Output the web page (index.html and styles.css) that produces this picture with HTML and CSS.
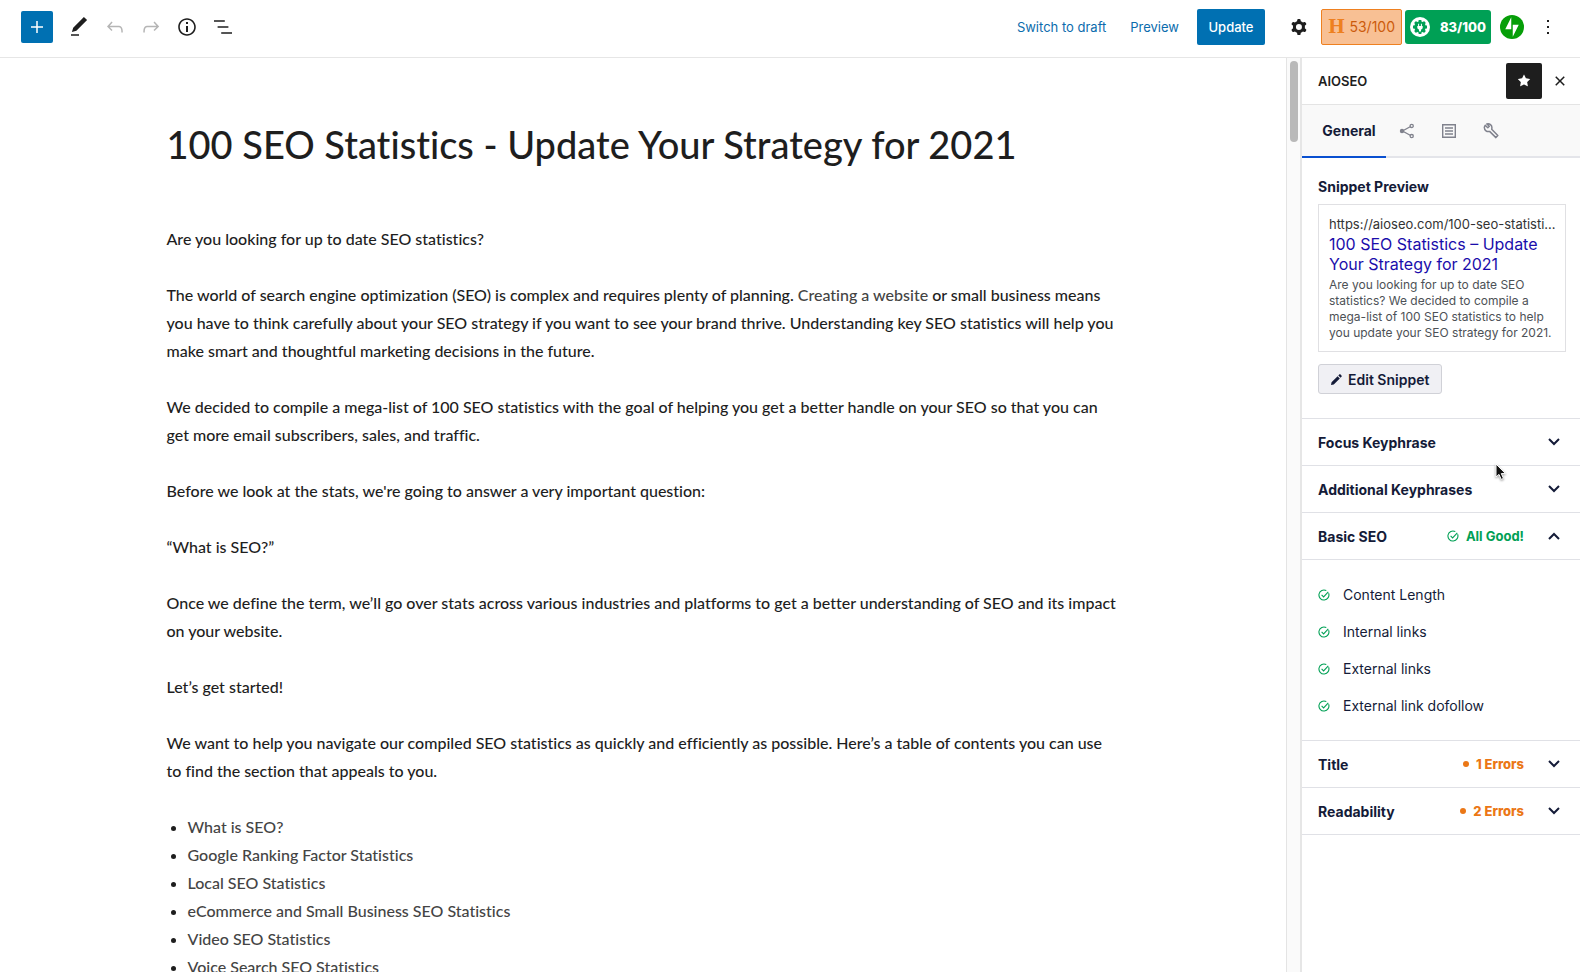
FILE: index.html
```html
<!DOCTYPE html>
<html lang="en">
<head>
    <meta charset="UTF-8">
    <meta name="viewport" content="width=device-width, initial-scale=1.0">
    <title>Edit Post</title>
    <link rel="stylesheet" href="styles.css">
</head>
<body>

<!-- Shared icons -->
<svg class="icon-defs" aria-hidden="true">
    <symbol id="chevron" viewBox="0 0 12 8"><path d="M1 1l5 5 5-5" fill="none" stroke="currentColor" stroke-width="2"/></symbol>
    <symbol id="check" viewBox="0 0 12 12"><path d="M10.600 4.200A5 5 0 1 1 8.300 1.600M3.600 5.900l2 2L10.300 2.900" fill="none" stroke="currentColor" stroke-width="1.100"/></symbol>
</svg>

<header class="toolbar">
    <div class="tools">
        <button class="add-button" aria-label="Add block"><svg viewBox="0 0 24 24"><path d="M11.250 6h1.500v5.250H18v1.500h-5.250V18h-1.500v-5.250H6v-1.500h5.250z"/></svg></button>
        <button class="icon-button" aria-label="Tools"><svg viewBox="0 0 24 24"><path d="M20.100 5.100L16.900 2 6.200 12.700l-1.300 4.400 4.500-1.300L20.100 5.100zM4 20.800h8v-1.500H4v1.500z"/></svg></button>
        <button class="icon-button faded" aria-label="Undo"><svg viewBox="0 0 24 24"><path d="M18.300 11.700c-.6-.6-1.400-.9-2.300-.9H6.700l2.900-3.300-1.100-1-4.500 5L8.500 16l1-1-2.700-2.700H16c.5 0 .9.200 1.300.5 1 1 1 3.400 1 4.500v.3h1.500v-.2c0-1.500 0-4.300-1.500-5.700z"/></svg></button>
        <button class="icon-button faded" aria-label="Redo"><svg viewBox="0 0 24 24"><path d="M15.600 6.500l-1.100 1 2.900 3.300H8c-.9 0-1.700.3-2.300.9-1.400 1.500-1.400 4.200-1.400 5.600v.2h1.500v-.3c0-1.100 0-3.500 1-4.500.3-.3.7-.5 1.300-.5h9.200L14.500 15l1.100 1.100 4.600-4.600-4.600-5z"/></svg></button>
        <button class="icon-button" aria-label="Details"><svg viewBox="0 0 24 24"><path d="M12 3.200c-4.800 0-8.800 3.900-8.800 8.800 0 4.800 3.900 8.800 8.800 8.800 4.800 0 8.800-3.900 8.800-8.800 0-4.800-4-8.800-8.800-8.800zm0 16c-4 0-7.200-3.300-7.200-7.200C4.800 8 8 4.800 12 4.800s7.200 3.300 7.200 7.200c0 4-3.200 7.200-7.200 7.200zM11 17h2v-6h-2v6zm0-8h2V7h-2v2z"/></svg></button>
        <button class="icon-button" aria-label="List view"><svg viewBox="0 0 24 24"><path d="M13.800 5.200H3v1.500h10.800V5.200zm-3.600 12v1.500H21v-1.500H10.200zm7.200-6H6.600v1.500h10.800v-1.500z"/></svg></button>
    </div>
    <div class="settings">
        <button class="text-button">Switch to draft</button>
        <button class="text-button">Preview</button>
        <button class="update-button">Update</button>
        <button class="icon-button" aria-label="Settings"><svg viewBox="0 0 24 24"><path fill-rule="evenodd" d="M10.289 4.836A1 1 0 0111.275 4h1.306a1 1 0 01.987.836l.244 1.466c.787.26 1.503.679 2.108 1.218l1.393-.522a1 1 0 011.216.437l.653 1.130a1 1 0 01-.23 1.273l-1.148.944a6.025 6.025 0 010 2.435l1.149.946a1 1 0 01.23 1.272l-.653 1.130a1 1 0 01-1.216.437l-1.394-.522c-.605.54-1.320.958-2.108 1.218l-.244 1.466a1 1 0 01-.987.836h-1.306a1 1 0 01-.986-.836l-.244-1.466a5.995 5.995 0 01-2.108-1.218l-1.394.522a1 1 0 01-1.217-.436l-.653-1.131a1 1 0 01.23-1.272l1.149-.946a6.026 6.026 0 010-2.435l-1.148-.944a1 1 0 01-.23-1.272l.653-1.131a1 1 0 011.217-.437l1.393.522a5.994 5.994 0 012.108-1.218l.244-1.466zM14.929 12a3 3 0 11-6 0 3 3 0 016 0z"/></svg></button>
        <button class="headline-score"><span class="headline-logo">H</span>53/100</button>
        <button class="seo-score">
            <svg viewBox="0 0 20 20">
                <circle cx="10" cy="10" r="10" fill="#fff"/>
                <circle cx="10" cy="10" r="5.800"/>
                <path d="M8.600 3h2.800v14H8.600zM3 8.600h14v2.800H3z"/>
                <path d="M4.100 6L6 4.100 15.900 14 14 15.900zM14 4.100L15.900 6 6 15.900 4.100 14z"/>
                <path d="M7.300 9h.8V6.800h1V9h1.800V6.800h1V9h.8v2.200l-1.700 1.500V14.500H9v-1.800l-1.700-1.500z" fill="#fff"/>
            </svg>
            83/100
        </button>
        <button class="icon-button jetpack" aria-label="Jetpack"><svg viewBox="0 0 32 32"><circle cx="16" cy="16" r="16" fill="#069e08"/><path d="M15 19H7l8-16zM17 29V13h8z" fill="#fff"/></svg></button>
        <button class="icon-button" aria-label="Options"><svg viewBox="0 0 24 24"><path d="M13 19h-2v-2h2v2zm0-6h-2v-2h2v2zm0-6h-2V5h2v2z"/></svg></button>
    </div>
</header>

<div class="workspace">
    <main class="editor">
        <article class="post">
            <h1>100 SEO Statistics - Update Your Strategy for 2021</h1>
            <p>Are you looking for up to date SEO statistics?</p>
            <p>The world of search engine optimization (SEO) is complex and requires plenty of planning. <a href="#">Creating a website</a> or small business means<br>you have to think carefully about your SEO strategy if you want to see your brand thrive. Understanding key SEO statistics will help you<br>make smart and thoughtful marketing decisions in the future.</p>
            <p>We decided to compile a mega-list of 100 SEO statistics with the goal of helping you get a better handle on your SEO so that you can<br>get more email subscribers, sales, and traffic.</p>
            <p>Before we look at the stats, we're going to answer a very important question:</p>
            <p>“What is SEO?”</p>
            <p>Once we define the term, we’ll go over stats across various industries and platforms to get a better understanding of SEO and its impact<br>on your website.</p>
            <p>Let’s get started!</p>
            <p>We want to help you navigate our compiled SEO statistics as quickly and efficiently as possible. Here’s a table of contents you can use<br>to find the section that appeals to you.</p>
            <ul>
                <li><a href="#">What is SEO?</a></li>
                <li><a href="#">Google Ranking Factor Statistics</a></li>
                <li><a href="#">Local SEO Statistics</a></li>
                <li><a href="#">eCommerce and Small Business SEO Statistics</a></li>
                <li><a href="#">Video SEO Statistics</a></li>
                <li><a href="#">Voice Search SEO Statistics</a></li>
            </ul>
        </article>
    </main>
    <div class="scrollbar"><div class="thumb"></div></div>

    <aside class="sidebar">
        <div class="sidebar-header">
            <strong>AIOSEO</strong>
            <button class="star-button" aria-label="Unpin from toolbar"><svg viewBox="0 0 24 24"><path d="M11.776 4.454a.25.25 0 01.448 0l2.069 4.192a.25.25 0 00.188.137l4.626.672a.25.25 0 01.139.426l-3.348 3.263a.25.25 0 00-.072.222l.79 4.607a.25.25 0 01-.362.263l-4.138-2.175a.25.25 0 00-.232 0l-4.138 2.175a.25.25 0 01-.363-.263l.79-4.607a.25.25 0 00-.071-.222L4.754 9.881a.25.25 0 01.139-.426l4.626-.672a.25.25 0 00.188-.137l2.069-4.192z"/></svg></button>
            <button class="icon-button" aria-label="Close"><svg viewBox="0 0 24 24"><path d="M12 13.060l3.712 3.713 1.061-1.060L13.061 12l3.712-3.712-1.060-1.060L12 10.938 8.288 7.227l-1.061 1.060L10.939 12l-3.712 3.712 1.060 1.061L12 13.061z"/></svg></button>
        </div>

        <nav class="tabs">
            <button class="tab active">General</button>
            <button class="tab" aria-label="Social"><svg viewBox="0 0 16 16"><path d="M12.500 3L3.500 8l9 5" fill="none" stroke="currentColor" stroke-width="1.300"/><circle cx="3" cy="8" r="2.200" fill="currentColor"/><g fill="#f9f9f9" stroke="currentColor" stroke-width="1.300"><circle cx="12.700" cy="2.900" r="1.600"/><circle cx="12.700" cy="13.100" r="1.600"/></g></svg></button>
            <button class="tab" aria-label="Schema"><svg viewBox="0 0 16 16"><path d="M1.700 1.700h12.600v12.600H1.700zM4 5h8M4 8h8M4 11h8" fill="none" stroke="currentColor" stroke-width="1.400"/></svg></button>
            <button class="tab" aria-label="Advanced"><svg viewBox="0 0 16 16"><path d="M2.200 2.200L4.800 4.800l1.500-1.500L3.800 1C6.500.2 9.200 2.200 8.900 5.200l-.2 1.100 6.100 6.300-1.900 2-6.300-6.200C4 9.200 1.300 7.300 1.300 4.300z" fill="none" stroke="currentColor" stroke-width="1.500" stroke-linejoin="round"/></svg></button>
        </nav>

        <section class="snippet">
            <h2>Snippet Preview</h2>
            <div class="snippet-box">
                <div class="snippet-url">https://aioseo.com/100-seo-statisti…</div>
                <div class="snippet-title">100 SEO Statistics – Update Your Strategy for 2021</div>
                <div class="snippet-text">Are you looking for up to date SEO statistics? We decided to compile a mega-list of 100 SEO statistics to help you update your SEO strategy for 2021.</div>
            </div>
            <button class="edit-button"><svg viewBox="0 0 12 12"><path d="M0 12l.6-3L7.200 2.400l2.400 2.400L3 11.400zM8 1.600L9.200.4q.5-.5 1 0l1.400 1.400q.5.500 0 1L10.400 4z"/></svg>Edit Snippet</button>
        </section>

        <button class="panel-row"><span class="name">Focus Keyphrase</span><svg class="chevron"><use href="#chevron"/></svg></button>
        <button class="panel-row"><span class="name">Additional Keyphrases</span><svg class="chevron"><use href="#chevron"/></svg></button>
        <button class="panel-row"><span class="name">Basic SEO</span><span class="status good"><svg class="check"><use href="#check"/></svg>All Good!</span><svg class="chevron up"><use href="#chevron"/></svg></button>
        <ul class="checklist">
            <li><svg class="check"><use href="#check"/></svg>Content Length</li>
            <li><svg class="check"><use href="#check"/></svg>Internal links</li>
            <li><svg class="check"><use href="#check"/></svg>External links</li>
            <li><svg class="check"><use href="#check"/></svg>External link dofollow</li>
        </ul>
        <button class="panel-row"><span class="name">Title</span><span class="status errors"><span class="dot"></span>1 Errors</span><svg class="chevron"><use href="#chevron"/></svg></button>
        <button class="panel-row last"><span class="name">Readability</span><span class="status errors"><span class="dot"></span>2 Errors</span><svg class="chevron"><use href="#chevron"/></svg></button>

        <svg class="cursor" viewBox="0 0 12 18"><path d="M1 1v13l3-2.600 2.200 5 2.300-1-2.200-4.800H10.500z" fill="#111" stroke="#fff" stroke-width="1"/></svg>
    </aside>
</div>

</body>
</html>
```

FILE: styles.css
```css
* {
    box-sizing: border-box;
}
body {
    margin: 0;
    height: 100vh;
    display: flex;
    flex-direction: column;
    overflow: hidden;
    background-color: #fff;
    color: #1e1e1e;
    font-family: Inter, "Liberation Sans", sans-serif;
    font-size: 13px;
}
button {
    font-family: inherit;
    font-size: 13px;
    color: inherit;
    background: none;
    border: none;
    padding: 0;
    cursor: pointer;
}
svg {
    display: block;
    fill: currentColor;
}
.icon-defs {
    display: none;
}

/* Top toolbar */
.toolbar {
    display: flex;
    justify-content: space-between;
    align-items: center;
    flex-shrink: 0;
    height: 58px;
    padding: 0 14px 4px 21px;
    border-bottom: 1px solid #e6e6e6;
}
.tools, .settings {
    display: flex;
    align-items: center;
}
.add-button {
    width: 32px;
    height: 32px;
    padding: 4px;
    margin-right: 8px;
    border-radius: 2px;
    background-color: #0070b2;
    color: #fff;
}
.icon-button {
    width: 36px;
    height: 36px;
    padding: 6px;
}
.faded {
    color: #b5b5b5;
}
.text-button {
    color: #0b6cad;
    margin-right: 24px;
}
.text-button + .update-button {
    margin-left: -6px;
}
.update-button {
    width: 68px;
    height: 36px;
    margin-right: 16px;
    border-radius: 2px;
    background-color: #0070b2;
    color: #fff;
    font-weight: 500;
}
.headline-score {
    display: flex;
    align-items: center;
    justify-content: space-between;
    width: 81px;
    height: 36px;
    margin: 0 3px 0 4px;
    padding: 0 6px;
    border: 1px solid #ee8020;
    border-radius: 2px;
    background-color: #f8c094;
    color: #cc5b0c;
    font-size: 14px;
}
.headline-logo {
    color: #ee8020;
    font-family: "DejaVu Serif", serif;
    font-size: 18px;
    font-weight: bold;
}
.seo-score {
    display: flex;
    align-items: center;
    justify-content: space-between;
    width: 86px;
    height: 34px;
    margin-right: 3px;
    padding: 0 5px;
    border-radius: 3px;
    background-color: #00a055;
    color: #fff;
    font-weight: 800;
}
.seo-score svg {
    width: 20px;
    height: 20px;
    fill: #00a055;
}

/* Post editor */
.workspace {
    display: flex;
    flex: 1;
    min-height: 0;
}
.editor {
    flex: 1;
    min-width: 0;
    overflow: hidden;
}
.post {
    max-width: 953px;
    margin: 0 auto;
    font-family: Lato, "Open Sans", sans-serif;
    font-size: 16px;
    font-weight: 500;
    font-variant-ligatures: none;
    line-height: 28px;
}
.post h1 {
    margin: 61px 0 56px;
    font-size: 38px;
    font-weight: 500;
    line-height: 50px;
}
.post p {
    margin: 0 0 28px;
}
.post ul {
    margin: 0;
    padding-left: 21px;
}
.post a {
    color: #444;
    text-decoration: none;
}
.scrollbar {
    width: 14px;
    padding: 3px 2px;
    border-left: 1px solid #e4e4e4;
    background-color: #fafafa;
}
.thumb {
    width: 8px;
    height: 81px;
    margin-left: 1px;
    border-radius: 4px;
    background-color: #b9b9b9;
}

/* AIOSEO sidebar */
.sidebar {
    position: relative;
    width: 280px;
    border-left: 2px solid #e6e6e6;
    color: #141b38;
}
.sidebar-header {
    display: flex;
    align-items: center;
    height: 47px;
    padding: 0 2px 0 16px;
    border-bottom: 1px solid #e4e4e4;
    color: #1e1e1e;
}
.sidebar-header strong {
    flex: 1;
    font-weight: 600;
}
.star-button {
    width: 36px;
    height: 36px;
    padding: 8px;
    border-radius: 2px;
    background-color: #1e1e1e;
    color: #fff;
}
.star-button svg {
    width: 20px;
    height: 20px;
}
.tabs {
    display: flex;
    height: 53px;
    background-color: #f9f9f9;
    border-bottom: 2px solid #e4e5ea;
}
.tab {
    width: 42px;
    height: 53px;
    padding: 0 13px 2px;
    color: #80828d;
}
.tab.active {
    width: 84px;
    padding: 0 0 0 10px;
    border-bottom: 2px solid #0a50d0;
    color: #141b38;
    font-size: 14px;
    font-weight: 700;
}
.snippet {
    padding: 20px 14px 24px 16px;
}
.snippet h2 {
    margin: 0 0 8px;
    font-size: 14px;
    line-height: 18px;
}
.snippet-box {
    padding: 10px;
    border: 1px solid #e0e0e3;
}
.snippet-url {
    color: #333;
    line-height: 18px;
    white-space: nowrap;
}
.snippet-title {
    margin: 1px 0 3px;
    color: #1a0dab;
    font-size: 16px;
    line-height: 20px;
}
.snippet-text {
    color: #4d5156;
    font-size: 12px;
    line-height: 16px;
}
.edit-button {
    display: flex;
    align-items: center;
    gap: 6px;
    height: 30px;
    margin-top: 12px;
    padding: 0 12px;
    border: 1px solid #d0d1d7;
    border-radius: 3px;
    background-color: #f0f0f4;
    font-size: 14px;
    font-weight: 600;
}
.edit-button svg {
    width: 11px;
    height: 11px;
}
.panel-row {
    display: flex;
    align-items: center;
    width: 100%;
    height: 47px;
    padding: 0 20px 0 16px;
    border-top: 1px solid #e0e1e6;
    text-align: left;
}
.panel-row.last {
    height: 48px;
    border-bottom: 1px solid #e0e1e6;
}
.name {
    flex: 1;
    font-size: 14px;
    font-weight: 700;
}
.chevron {
    width: 12px;
    height: 8px;
}
.chevron.up {
    transform: rotate(180deg);
}
.check {
    width: 12px;
    height: 12px;
    color: #00a055;
}
.status {
    display: flex;
    align-items: center;
    gap: 7px;
    margin-right: 24px;
    font-weight: 800;
}
.good {
    color: #00a055;
    font-weight: 700;
}
.errors {
    color: #eb7716;
}
.dot {
    width: 6px;
    height: 6px;
    border-radius: 50%;
    background-color: #eb7716;
}
.checklist {
    margin: 0;
    padding: 16px;
    border-top: 1px solid #e0e1e6;
    list-style: none;
    font-size: 14px;
}
.checklist li {
    display: flex;
    align-items: center;
    gap: 13px;
    height: 37px;
}

/* Mouse pointer over the panels */
.cursor {
    position: absolute;
    top: 405px;
    left: 193px;
    width: 12px;
    height: 18px;
    filter: drop-shadow(0 1px 1px rgba(0, 0, 0, 0.4));
}
```
